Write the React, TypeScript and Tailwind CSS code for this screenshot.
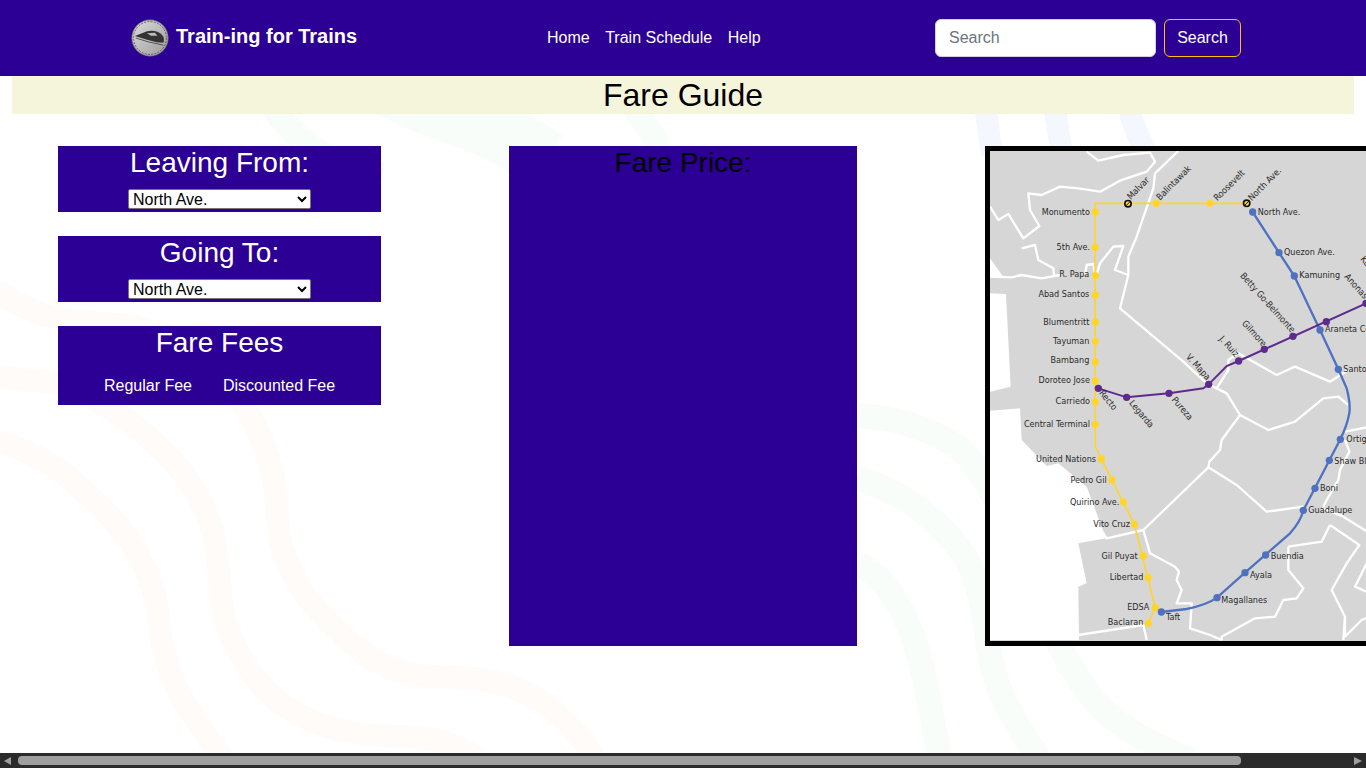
const stations = ['North Ave.', 'Quezon Ave.', 'Kamuning', 'Araneta Center-Cubao', 'Santolan', 'Ortigas', 'Shaw Blvd.', 'Boni', 'Guadalupe', 'Buendia', 'Ayala', 'Magallanes', 'Taft']

const roads = [
  'M30,200 L55,240 L85,222 L130,295 L178,258 L150,210 L145,160 L185,165 L240,140 L295,145 L360,155 L420,122 L500,95 L525,65 L510,38 L430,45 L355,62 L320,35',
  'M125,325 L165,315 L175,360 L220,385 L222,405',
  'M30,410 L95,412 L125,405 L185,415 L240,405',
  'M315,405 L320,375 L340,372 L345,400',
  'M345,420 L360,370 L400,320 L430,318 L405,390 L445,405',
  'M595,33 L525,100 L520,145 L470,290 L445,350 L445,405 L420,505 L610,665 L680,730 L710,745 L740,760 L780,825 L725,900 L720,930 L688,965 L685,982 L490,1170 L380,1195 L360,1165',
  'M685,982 L770,1035 L860,1115 L970,1100',
  'M780,825 L865,870 L945,845 L1030,775 L1075,770 L1105,795',
  'M490,1170 L510,1240 L585,1280 L597,1295 L590,1320 L605,1350 L590,1390 L635,1390 L630,1465 L690,1485 L725,1500',
  'M1095,875 L1170,860',
  'M1095,900 L1108,935 L1080,990 L1075,1020 L1040,1080 L1030,1100',
  'M1170,1180 L1090,1130 L1030,1105',
  'M1050,1155 L1138,1215 L1100,1270 L1055,1350 L1095,1430 L1090,1500',
  'M925,1220 L1025,1205 L1050,1155',
  'M925,1220 L925,1290 L970,1345 L950,1375 L910,1380 L885,1430 L825,1435 L725,1490 L725,1500',
  'M1170,1250 L1125,1340 L1170,1360',
  'M1095,1430 L1095,1490 L1145,1440 L1170,1430',
  'M295,1485 L490,1455 L500,1500',
  'M710,745 L745,690 L745,660 L775,640 L890,705 L945,680 L1050,725 L1105,690',
]

const yellowStops = [
  [346, 216], [345, 322], [346, 407], [346, 465], [346, 546], [346, 604], [346, 666], [346, 723],
  [346, 785], [346, 853], [364, 957], [396, 1020], [430, 1086], [463, 1153], [490, 1248], [504, 1313],
  [526, 1403], [505, 1450], [529, 190], [690, 190],
]

const blueStops = [
  [818, 216], [897, 338], [943, 408], [1020, 570], [1075, 688], [1081, 898], [1048, 961], [1005, 1045],
  [970, 1111], [857, 1245], [795, 1298], [711, 1373], [544, 1416],
]

const purpleStops = [
  [355, 745], [440, 772], [567, 760], [686, 733], [776, 663], [853, 628], [939, 589], [1039, 545], [1158, 490],
]

const leftLabels: [string, number, number][] = [
  ['Monumento', 330, 224], ['5th Ave.', 330, 330], ['R. Papa', 328, 412], ['Abad Santos', 328, 472],
  ['Blumentritt', 328, 556], ['Tayuman', 328, 612], ['Bambang', 328, 670], ['Doroteo Jose', 330, 730],
  ['Carriedo', 330, 793], ['Central Terminal', 330, 862], ['United Nations', 348, 965], ['Pedro Gil', 380, 1029],
  ['Quirino Ave.', 418, 1095], ['Vito Cruz', 450, 1161], ['Gil Puyat', 473, 1256], ['Libertad', 490, 1321],
  ['EDSA', 508, 1411], ['Baclaran', 490, 1456],
]

const rightLabels: [string, number, number][] = [
  ['North Ave.', 833, 224], ['Quezon Ave.', 912, 346], ['Kamuning', 958, 414], ['Araneta Center', 1035, 577],
  ['Santolan', 1090, 696], ['Ortigas', 1099, 907], ['Shaw Blvd.', 1063, 971], ['Boni', 1020, 1054],
  ['Guadalupe', 985, 1120], ['Buendia', 872, 1257], ['Ayala', 810, 1313], ['Magallanes', 724, 1388], ['Taft', 558, 1440],
]

const upLabels: [string, number, number][] = [
  ['Malvar', 452, 180], ['Balintawak', 540, 182], ['Roosevelt', 712, 184], ['North Ave.', 815, 184],
]

const downLabels: [string, number, number][] = [
  ['Recto', 356, 760], ['Legarda', 446, 790], ['Pureza', 574, 780], ['Katipunan', 1140, 358],
]

const endLabels: [string, number, number][] = [
  ['V. Mapa', 680, 722], ['J. Ruiz', 765, 652], ['Gilmore', 848, 622], ['Betty Go-Belmonte', 934, 580], ['Anonas', 1152, 478],
]

function TrainMap() {
  return (
    <svg viewBox="30 33 1470 1470" className="block h-[490px] w-[490px] shrink-0 bg-[#d6d6d6] font-['DejaVu_Sans',sans-serif]">
      <path fill="#fff" d="M30,812 L120,805 L125,900 L200,978 L235,970 L320,1040 L378,1195 L295,1210 L320,1330 L295,1340 L297,1500 L30,1500 Z" />
      <path fill="#fff" d="M30,460 L78,462 L92,740 L30,755 Z M30,355 L70,410 L30,410 Z" />
      <g fill="none" stroke="#fff" strokeWidth="7" strokeLinejoin="round">
        {roads.map((d) => <path key={d} d={d} />)}
      </g>
      <path fill="none" stroke="#ffd52a" strokeWidth="5" d="M800,190 L345,190 L346,920 L364,957 L463,1153 L526,1403 L505,1450" />
      <path fill="none" stroke="#4f72c0" strokeWidth="7" d="M818,216 L897,338 L943,408 L1020,570 L1075,688 L1100,745 Q1112,790 1108,820 Q1100,860 1081,898 L970,1111 Q962,1145 930,1180 L795,1298 L711,1373 Q680,1395 620,1407 L544,1416" />
      <path fill="none" stroke="#5f2a8e" strokeWidth="6" d="M355,745 L440,772 L567,760 L670,745 L686,733 L740,678 L776,663 L1158,490 L1200,470" />
      {yellowStops.map(([x, y]) => <circle key={`${x}-${y}`} cx={x} cy={y} r="11" fill="#ffd52a" />)}
      {blueStops.map(([x, y]) => <circle key={`${x}-${y}`} cx={x} cy={y} r="11" fill="#4f72c0" />)}
      {purpleStops.map(([x, y]) => <circle key={`${x}-${y}`} cx={x} cy={y} r="11" fill="#5f2a8e" />)}
      {[[444, 191], [800, 190]].map(([x, y]) => (
        <g key={x}>
          <circle cx={x} cy={y} r="9.5" fill="#ffd52a" stroke="#111" strokeWidth="5" />
          <line x1={x - 6} y1={y + 6} x2={x + 6} y2={y - 6} stroke="#111" strokeWidth="3" />
        </g>
      ))}
      <g fill="#2a2a2a" fontSize="27" className="[font-stretch:condensed]">
        {leftLabels.map(([t, x, y]) => <text key={t} x={x} y={y} textAnchor="end">{t}</text>)}
        {rightLabels.map(([t, x, y]) => <text key={`${t}${y}`} x={x} y={y}>{t}</text>)}
        {upLabels.map(([t, x, y]) => <text key={`${t}${x}`} x={x} y={y} transform={`rotate(-45 ${x} ${y})`}>{t}</text>)}
        {downLabels.map(([t, x, y]) => <text key={t} x={x} y={y} transform={`rotate(50 ${x} ${y})`}>{t}</text>)}
        {endLabels.map(([t, x, y]) => <text key={t} x={x} y={y} textAnchor="end" transform={`rotate(48 ${x} ${y})`}>{t}</text>)}
      </g>
    </svg>
  )
}

function Waves() {
  return (
    <svg className="absolute inset-0 h-full w-full" viewBox="0 0 1366 768" fill="none" strokeWidth="23">
      <g stroke="#fffbf8">
        <path d="M-5,441 C30,450 55,465 79,487 C125,525 145,560 154,593 C160,615 158,630 162,643 C170,685 190,715 225,760" />
        <path d="M-5,375 C20,382 40,380 59,383 C90,392 150,430 186,477 C205,505 212,525 215,543 C222,575 218,600 225,620 C235,650 250,675 269,693 C295,718 325,728 356,733 C390,738 420,735 435,740 C455,745 465,750 480,760" />
        <path d="M-5,290 C15,303 25,308 40,313 C70,324 110,322 138,327 C190,345 225,375 245,407 C262,435 270,460 273,477 C278,500 276,525 281,543 C288,570 305,600 328,620 C350,645 370,660 395,670 C425,680 460,675 486,680 C515,686 535,695 553,710 C570,725 585,740 595,760" />
      </g>
      <g stroke="#f9fdf9" strokeWidth="25">
        <path d="M857,563 C880,575 890,590 900,607 C915,635 922,665 927,690 C932,715 935,735 940,760" />
        <path d="M857,478 C880,485 900,495 917,507 C945,530 965,550 973,573 C985,605 985,630 990,657 C998,690 1005,705 1017,723 C1025,738 1032,748 1040,760" />
        <path d="M857,415 C880,418 900,420 917,427 C945,437 965,450 973,463 C1020,530 1040,610 1060,647 C1075,675 1085,690 1100,707 C1130,735 1155,745 1190,760" />
        <path d="M262,90 C275,115 295,135 310,146 C335,165 360,170 383,175" />
        <path strokeWidth="60" d="M390,85 C425,112 480,112 545,160" />
        <path d="M625,95 C640,115 655,135 668,165" />
      </g>
      <g stroke="#f4f7fd" strokeWidth="22">
        <path d="M985,105 L992,155" />
        <path d="M1054,105 L1062,155" />
        <path d="M1128,105 C1132,125 1140,140 1148,155" />
      </g>
    </svg>
  )
}

function Logo() {
  return (
    <svg viewBox="0 0 40 40" className="h-[38px] w-[38px] shrink-0">
      <defs>
        <linearGradient id="coin" x1="0" y1="0" x2="1" y2="1">
          <stop offset="0" stopColor="#dcdcdc" />
          <stop offset="1" stopColor="#9c9c9c" />
        </linearGradient>
      </defs>
      <circle cx="20" cy="20" r="19.5" fill="#7d7d7d" />
      <circle cx="20" cy="20" r="18.5" fill="url(#coin)" />
      <circle cx="20" cy="20" r="17.3" fill="none" stroke="#444" strokeWidth="0.8" strokeDasharray="2 1.4" />
      <path fill="#333" d="M4,18 L17,13 C23,11.5 29,13 33,17 C35,19 35,23 34,25 L27,24.5 L16,21.5 Z" />
      <path fill="#bdbdbd" d="M17,15 L25,14.5 L28,17.5 L21,17.5 Z" />
      <path fill="none" stroke="#333" strokeWidth="0.8" d="M5,20 L18,24 L34,27.5" />
    </svg>
  )
}

function RouteSelect() {
  return (
    <select className="mx-auto block h-5 w-[183px] rounded-[2px] border border-[#767676] bg-white text-base leading-none text-black">
      {stations.map((s) => <option key={s}>{s}</option>)}
    </select>
  )
}

export default function App() {
  return (
    <div className="relative flex h-screen w-screen flex-col overflow-hidden bg-white font-['Liberation_Sans',Arial,sans-serif]">
      <Waves />
      <header className="relative flex h-[76px] shrink-0 items-center bg-[#2c0095] pl-[131px] text-white">
        <div className="flex w-[416px] items-center gap-[7px]">
          <Logo />
          <span className="relative -top-[2px] text-xl leading-6 font-bold">Train-ing for Trains</span>
        </div>
        <nav className="flex w-[388px] gap-[15.5px] text-base">
          <a>Home</a>
          <a>Train Schedule</a>
          <a>Help</a>
        </nav>
        <form className="flex gap-2">
          <input
            placeholder="Search"
            className="h-[38px] w-[221px] rounded-md border border-[#ced4da] bg-white px-[13px] text-base text-[#212529] placeholder:text-[#6c757d]"
          />
          <button type="button" className="h-[38px] w-[77px] rounded-md border border-[#ffc107] text-base text-white">
            Search
          </button>
        </form>
      </header>

      <h1 className="relative mx-3 h-[38px] shrink-0 bg-[#f5f5dc] text-center text-[32px] leading-[38px] font-normal text-black">
        Fare Guide
      </h1>

      <main className="relative flex min-h-0 flex-1 gap-32 overflow-hidden pt-8 pl-[58px]">
        <div className="flex w-[323px] shrink-0 flex-col gap-6 text-center text-white">
          <section className="h-[66px] bg-[#2c0095]">
            <h2 className="mb-[9px] text-[28px] leading-[34px]">Leaving From:</h2>
            <RouteSelect />
          </section>
          <section className="h-[66px] bg-[#2c0095]">
            <h2 className="mb-[9px] text-[28px] leading-[34px]">Going To:</h2>
            <RouteSelect />
          </section>
          <section className="h-[79px] bg-[#2c0095]">
            <h2 className="mb-[16px] text-[28px] leading-[34px]">Fare Fees</h2>
            <div className="flex justify-center gap-[31px] text-base leading-[19px]">
              <span>Regular Fee</span>
              <span>Discounted Fee</span>
            </div>
          </section>
        </div>

        <section className="h-[500px] w-[348px] shrink-0 bg-[#2c0095] text-center">
          <h2 className="text-[28px] leading-[34px] text-black">Fare Price:</h2>
        </section>

        <div className="h-[500px] w-[500px] shrink-0 border-[5px] border-black">
          <TrainMap />
        </div>
      </main>

      <div className="relative flex h-[15px] shrink-0 items-center bg-[#2b2b2b] pl-1">
        <span className="h-0 w-0 border-y-[4.5px] border-r-[7px] border-y-transparent border-r-[#9f9f9f]" />
        <span className="ml-[7px] h-[9px] w-[1223px] rounded-[4px] bg-[#9f9f9f]" />
        <span className="ml-[113px] h-0 w-0 border-y-[4.5px] border-l-[8px] border-y-transparent border-l-[#9f9f9f]" />
      </div>
    </div>
  )
}
